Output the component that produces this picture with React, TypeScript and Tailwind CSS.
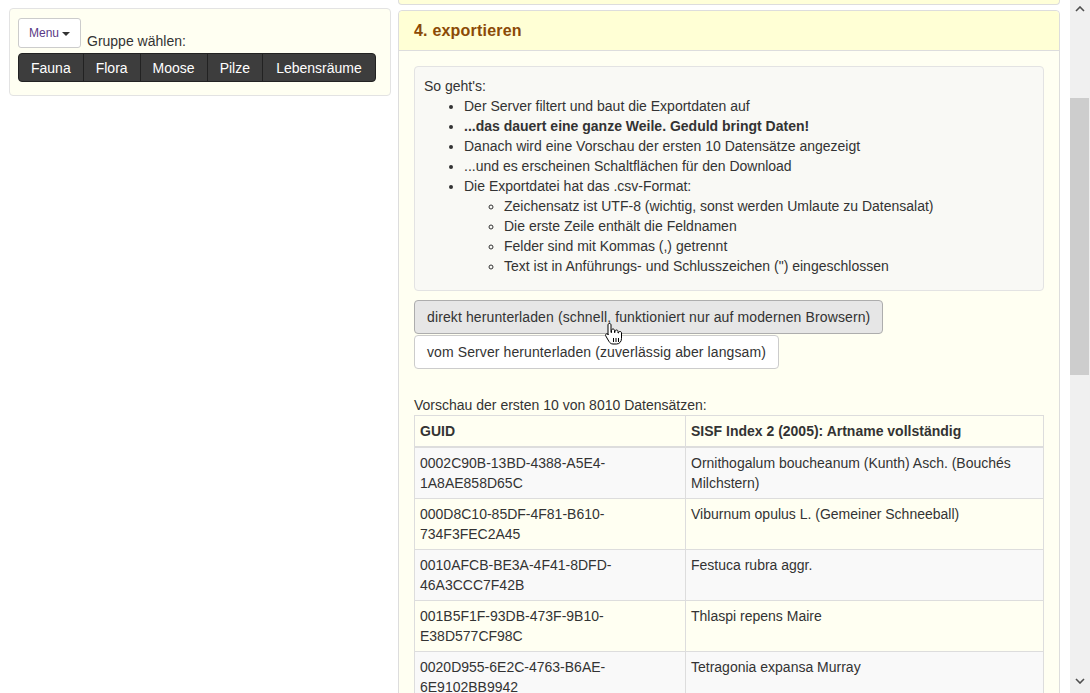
import React from 'react';

const groups = ['Fauna', 'Flora', 'Moose', 'Pilze', 'Lebensräume'];

const rows = [
   ['0002C90B-13BD-4388-A5E4-1A8AE858D65C', 'Ornithogalum boucheanum (Kunth) Asch. (Bouchés Milchstern)'],
   ['000D8C10-85DF-4F81-B610-734F3FEC2A45', 'Viburnum opulus L. (Gemeiner Schneeball)'],
   ['0010AFCB-BE3A-4F41-8DFD-46A3CCC7F42B', 'Festuca rubra aggr.'],
   ['001B5F1F-93DB-473F-9B10-E38D577CF98C', 'Thlaspi repens Maire'],
   ['0020D955-6E2C-4763-B6AE-6E9102BB9942', 'Tetragonia expansa Murray'],
   ['0025A1B2-3C4D-4E5F-8A9B-0C1D2E3F4A5B', 'Carex digitata L.'],
];

const HandCursor = () => (
   <svg width="20" height="24" viewBox="0 0 20 24" className="absolute left-[604px] top-[322px] pointer-events-none">
      <path
         d="M5.5 1.5c.9 0 1.5.6 1.5 1.5v7.5h.5V8.5c0-.9.6-1.5 1.5-1.5s1.5.6 1.5 1.5v2h.5V9.5c0-.9.6-1.5 1.5-1.5s1.5.6 1.5 1.5v1.5h.5c0-.9.6-1.5 1.5-1.5s1.5.6 1.5 1.5v5.5c0 3-2 5.5-5 5.5H9c-2 0-3-1-4-2.5L1.8 14c-.5-.8-.3-1.6.4-2 .7-.4 1.5-.2 2 .5L4 13V3c0-.9.6-1.5 1.5-1.5z"
         fill="#fff"
         stroke="#000"
         strokeWidth="1"
      />
      <path d="M9.5 16v4M12 16v4M14.5 16v4" stroke="#000" strokeWidth="1" />
   </svg>
);

const App: React.FC = () => {
   return (
      <div className="h-[693px] w-[1090px] overflow-hidden bg-white flex text-[14px] leading-[20px] text-[#333]" style={{ fontFamily: '"Liberation Sans", Arial, sans-serif' }}>
         <div className="flex-1 flex items-start relative">
            {/* left: group chooser */}
            <div className="ml-[9px] mt-[8px] w-[382px] bg-[#fffff2] border border-[#e3e3e3] rounded-[4px] pl-[8px] pt-[9px] pb-[13px]">
               <div className="flex items-end">
                  <button className="h-[30px] w-[63px] bg-white border border-[#ccc] rounded-[3px] text-[12px] text-[#5a3a86] flex items-center justify-center gap-[3px]">
                     Menu
                     <span className="w-0 h-0 border-l-[4px] border-r-[4px] border-t-[4px] border-l-transparent border-r-transparent border-t-[#333] mt-[1px]" />
                  </button>
                  <span className="ml-[6px] leading-[16px] mb-[-1px]">Gruppe wählen:</span>
               </div>
               <div className="mt-[5px] flex w-[358px] h-[29px] bg-[#3d3d3d] rounded-[4px] border border-[#222] text-white">
                  {groups.map((g, i) => (
                     <div key={g} className={`flex items-center justify-center px-[12px] ${i > 0 ? 'border-l border-[#222]' : ''} ${g === 'Lebensräume' ? 'flex-1' : ''}`}>
                        {g}
                     </div>
                  ))}
               </div>
            </div>

            {/* right: export panels */}
            <div className="ml-[7px] w-[662px] flex flex-col">
               <div className="h-[5px] bg-[#ffffd8] border-x border-b border-[#ddd] rounded-b-[4px]" />
               <div className="mt-[5px] border border-[#ddd] rounded-[4px] bg-[#fffff2]">
                  <div className="h-[40px] bg-[#ffffd5] border-b border-[#ddd] rounded-t-[4px] px-[15px] flex items-center pt-[1px]">
                     <h3 className="text-[16px] font-bold text-[#8b4a06] tracking-[0.2px]">4. exportieren</h3>
                  </div>
                  <div className="p-[15px]">
                     <div className="bg-[#f9f9f5] border border-[#e3e3e3] rounded-[4px] pl-[9px] pt-[9px] pb-[14px]">
                        <div>So geht's:</div>
                        <ul className="list-disc pl-[40px]">
                           <li>Der Server filtert und baut die Exportdaten auf</li>
                           <li className="font-bold">...das dauert eine ganze Weile. Geduld bringt Daten!</li>
                           <li>Danach wird eine Vorschau der ersten 10 Datensätze angezeigt</li>
                           <li>...und es erscheinen Schaltflächen für den Download</li>
                           <li>
                              Die Exportdatei hat das .csv-Format:
                              <ul className="list-[circle] pl-[40px]">
                                 <li>Zeichensatz ist UTF-8 (wichtig, sonst werden Umlaute zu Datensalat)</li>
                                 <li>Die erste Zeile enthält die Feldnamen</li>
                                 <li>Felder sind mit Kommas (,) getrennt</li>
                                 <li>Text ist in Anführungs- und Schlusszeichen (") eingeschlossen</li>
                              </ul>
                           </li>
                        </ul>
                     </div>

                     <div className="mt-[9px] flex flex-col items-start gap-[1px]">
                        <button className="h-[34px] px-[12px] bg-[#e6e6e6] border border-[#adadad] rounded-[4px] tracking-[0.12px]">
                           direkt herunterladen (schnell, funktioniert nur auf modernen Browsern)
                        </button>
                        <button className="h-[34px] px-[12px] bg-white border border-[#ccc] rounded-[4px] tracking-[0.1px]">
                           vom Server herunterladen (zuverlässig aber langsam)
                        </button>
                     </div>

                     <div className="mt-[26px]">Vorschau der ersten 10 von 8010 Datensätzen:</div>
                     <table className="w-full table-fixed border-collapse border border-[#ddd]">
                        <colgroup>
                           <col className="w-[271px]" />
                           <col />
                        </colgroup>
                        <thead>
                           <tr>
                              <th className="text-left font-bold px-[5px] py-[5px] border border-[#ddd] border-b-2">GUID</th>
                              <th className="text-left font-bold px-[5px] py-[5px] border border-[#ddd] border-b-2">SISF Index 2 (2005): Artname vollständig</th>
                           </tr>
                        </thead>
                        <tbody>
                           {rows.map((r, i) => (
                              <tr key={r[0]} className={i % 2 === 0 ? 'bg-[#f9f9f9]' : ''}>
                                 <td className="align-top px-[5px] py-[5px] border border-[#ddd]">{r[0]}</td>
                                 <td className="align-top px-[5px] py-[5px] border border-[#ddd]">{r[1]}</td>
                              </tr>
                           ))}
                        </tbody>
                     </table>
                  </div>
               </div>
            </div>
            <HandCursor />
         </div>

         {/* scrollbar */}
         <div className="w-[20px] h-full bg-[#f0f0f0] flex flex-col items-center">
            <svg width="10" height="6" viewBox="0 0 10 6" className="mt-[6px]">
               <path d="M1 5l4-4 4 4" fill="none" stroke="#505050" strokeWidth="1.6" />
            </svg>
            <div className="mt-[86px] w-[19px] h-[277px] bg-[#cdcdcd] self-start" />
            <div className="flex-1" />
            <svg width="10" height="6" viewBox="0 0 10 6" className="mb-[9px]">
               <path d="M1 1l4 4 4-4" fill="none" stroke="#505050" strokeWidth="1.6" />
            </svg>
         </div>
      </div>
   );
};

export default App;
